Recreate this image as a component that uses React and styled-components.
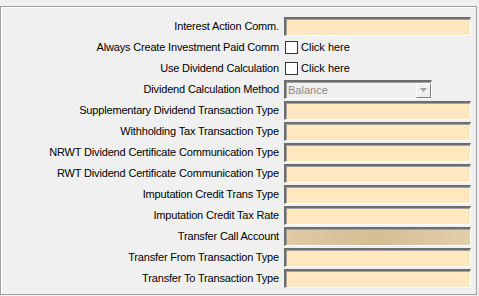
import React from "react";
import styled, { createGlobalStyle, css } from "styled-components";

const Global = createGlobalStyle`
  html, body { margin: 0; padding: 0; background: #f0f0f0; }
  body { font-family: "Liberation Sans", Arial, sans-serif; font-size: 11px; color: #000; }
`;

const Page = styled.div`
  width: 479px;
  height: 296px;
  padding-top: 6px;
  box-sizing: border-box;
  background: #f0f0f0;
`;

const Panel = styled.div`
  width: 477px;
  height: 289px;
  box-sizing: border-box;
  border: 1px solid #a0a0a0;
  box-shadow: inset 1px 1px 0 #fff;
  padding-top: 10px;
  display: grid;
  grid-template-columns: 278px 187px;
  grid-auto-rows: 19px;
  column-gap: 5px;
  row-gap: 2px;
  align-content: start;
`;

const Label = styled.div`
  text-align: right;
  line-height: 19px;
  white-space: nowrap;
  color: #000;
  letter-spacing: -0.17px;
`;

const sunken = css`
  box-sizing: border-box;
  border-top: 2px solid #6d6d6d;
  border-left: 2px solid #6d6d6d;
  border-right: 1px solid #fff;
  border-bottom: 1px solid #fff;
  box-shadow: inset 1px 1px 0 #a0a0a0;
`;

const Field = styled.div`
  ${sunken};
  height: 19px;
  width: 187px;
  background: ${(p) =>
    p.$locked
      ? "linear-gradient(90deg, #e0cba6 0%, #d9c29a 30%, #d6bd94 50%, #dcc6a0 75%, #e2cfab 100%)"
      : "#ffe8bf"};
`;

const CheckRow = styled.div`
  display: flex;
  align-items: center;
  gap: 3px;
  height: 19px;
`;

const Box = styled.span`
  width: 13px;
  height: 13px;
  box-sizing: border-box;
  background: #fff;
  border: 1px solid #333;
  margin-left: 1px;
`;

const CheckText = styled.span`
  font-size: 11px;
  line-height: 19px;
`;

const Select = styled.div`
  ${sunken};
  height: 19px;
  width: 148px;
  background: #f0f0f0;
  display: flex;
  align-items: center;
  justify-content: space-between;
  padding-left: 2px;
`;

const SelectText = styled.span`
  color: #8a8a8a;
  line-height: 15px;
`;

const ArrowBtn = styled.span`
  width: 15px;
  height: 15px;
  box-sizing: border-box;
  border-top: 1px solid #fff;
  border-left: 1px solid #fff;
  border-right: 1px solid #808080;
  border-bottom: 1px solid #808080;
  display: flex;
  align-items: center;
  justify-content: center;
  background: #f0f0f0;
`;

const rows = [
  { label: "Interest Action Comm.", type: "field" },
  { label: "Always Create Investment Paid Comm", type: "check" },
  { label: "Use Dividend Calculation", type: "check" },
  { label: "Dividend Calculation Method", type: "select" },
  { label: "Supplementary Dividend Transaction Type", type: "field" },
  { label: "Withholding Tax Transaction Type", type: "field" },
  { label: "NRWT Dividend Certificate Communication Type", type: "field" },
  { label: "RWT Dividend Certificate Communication Type", type: "field" },
  { label: "Imputation Credit Trans Type", type: "field" },
  { label: "Imputation Credit Tax Rate", type: "field" },
  { label: "Transfer Call Account", type: "locked" },
  { label: "Transfer From Transaction Type", type: "field" },
  { label: "Transfer To Transaction Type", type: "field" },
];

function Control({ type }) {
  if (type === "check")
    return (
      <CheckRow>
        <Box />
        <CheckText>Click here</CheckText>
      </CheckRow>
    );
  if (type === "select")
    return (
      <Select>
        <SelectText>Balance</SelectText>
        <ArrowBtn>
          <svg width="7" height="4" viewBox="0 0 7 4">
            <path d="M0 0h7L3.5 4z" fill="#a0a0a0" />
          </svg>
        </ArrowBtn>
      </Select>
    );
  return <Field $locked={type === "locked"} />;
}

export default function App() {
  return (
    <Page>
      <Global />
      <Panel>
        {rows.map((r) => (
          <React.Fragment key={r.label}>
            <Label>{r.label}</Label>
            <Control type={r.type} />
          </React.Fragment>
        ))}
      </Panel>
    </Page>
  );
}
